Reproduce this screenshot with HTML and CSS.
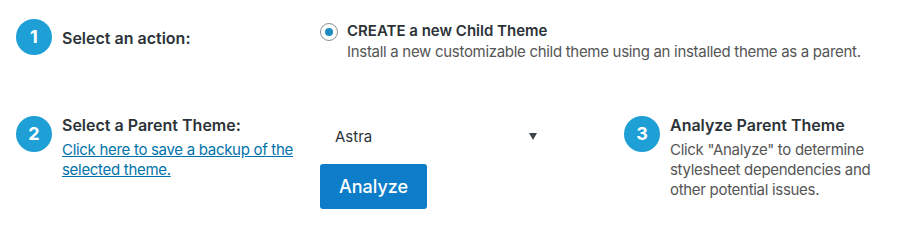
FILE: index.html
```html
<!DOCTYPE html>
<html lang="en">
  <head>
    <meta charset="UTF-8" />
    <title>Child Theme Configurator</title>
    <link rel="stylesheet" href="styles.css">
  </head>
  <body>
    <form class="steps">
      <div class="step step-one">
        <span class="badge">1</span>
        <span class="step-title">Select an action:</span>
      </div>

      <div class="action-cell">
        <label class="action-option">
          <input type="radio" name="action" checked />
          <span class="radio"></span>
          <span class="action-text">
            <strong>CREATE a new Child Theme</strong>
            <span class="action-desc">Install a new customizable child theme using an installed theme as a parent.</span>
          </span>
        </label>
      </div>

      <div class="spacer"></div>

      <div class="step">
        <span class="badge">2</span>
        <div class="step-body">
          <div class="step-title">Select a Parent Theme:</div>
          <a href="#" class="backup-link">Click here to save a backup of the selected theme.</a>
        </div>
      </div>

      <div class="parent-cell">
        <div class="select-wrap">
          <select class="theme-select">
            <option>Astra</option>
          </select>
        </div>
        <button type="button" class="btn-analyze">Analyze</button>
      </div>

      <div class="step">
        <span class="badge">3</span>
        <div class="step-body">
          <div class="step-title">Analyze Parent Theme</div>
          <p class="step-desc">Click "Analyze" to determine stylesheet dependencies and other potential issues.</p>
        </div>
      </div>
    </form>
  </body>
</html>
```

FILE: styles.css
```css
body {
  margin: 0;
  font-family: Inter, "Noto Sans", sans-serif;
  color: #2c3338;
  background: #fff;
}
.steps {
  display: grid;
  grid-template-columns: 304px 304px 1fr;
  align-items: start;
  row-gap: 53px;
  padding: 19px 0 0 16px;
}
.step {
  display: flex;
  align-items: flex-start;
  gap: 10px;
}
.step-one {
  align-items: center;
}
.badge {
  flex: none;
  width: 36px;
  height: 36px;
  margin-top: 1px;
  border-radius: 50%;
  background: #1ea0d7;
  color: #fff;
  font-weight: 700;
  font-size: 18px;
  line-height: 36px;
  text-align: center;
}
.step-one .badge {
  margin-top: 0;
}
.step-title {
  font-size: 16px;
  font-weight: 600;
  line-height: 20px;
  color: #2c3338;
}
.step-one .step-title {
  padding-top: 2px;
}
.backup-link {
  display: block;
  width: 236px;
  margin-top: 5px;
  font-size: 15px;
  line-height: 20px;
  letter-spacing: -0.3px;
  color: #0073aa;
}
.step-desc {
  margin: 5px 0 0;
  width: 212px;
  font-size: 15px;
  line-height: 20px;
  letter-spacing: -0.3px;
  color: #555;
}
.action-option {
  display: flex;
  align-items: flex-start;
  gap: 9px;
  padding-top: 2px;
}
.action-option input {
  display: none;
}
.radio {
  flex: none;
  width: 16px;
  height: 16px;
  margin-top: 2px;
  border: 1px solid #8c8f94;
  border-radius: 50%;
  display: flex;
  align-items: center;
  justify-content: center;
}
.action-option input:checked + .radio::after {
  content: "";
  width: 8px;
  height: 8px;
  border-radius: 50%;
  background: #1e8cbe;
}
.action-text {
  display: flex;
  flex-direction: column;
  gap: 1px;
}
.action-text strong {
  font-size: 15px;
  font-weight: 600;
  line-height: 20px;
  color: #2c3338;
}
.action-desc {
  font-size: 15px;
  line-height: 20px;
  letter-spacing: -0.3px;
  color: #555;
  white-space: nowrap;
}
.parent-cell {
  display: flex;
  flex-direction: column;
  align-items: flex-start;
  padding-top: 3px;
}
.select-wrap {
  position: relative;
  width: 225px;
}
.select-wrap::after {
  content: "";
  position: absolute;
  right: 8px;
  top: 15px;
  border-left: 4.5px solid transparent;
  border-right: 4.5px solid transparent;
  border-top: 7px solid #3c434a;
  pointer-events: none;
}
.theme-select {
  appearance: none;
  width: 100%;
  height: 36px;
  padding: 0 15px;
  border: none;
  background: transparent;
  font-family: inherit;
  font-size: 15px;
  color: #2c3338;
}
.btn-analyze {
  margin-top: 10px;
  width: 107px;
  height: 45px;
  border: none;
  border-radius: 3px;
  background: #0d7dc9;
  color: #fff;
  font-family: inherit;
  font-size: 18px;
  font-weight: 500;
}
```
